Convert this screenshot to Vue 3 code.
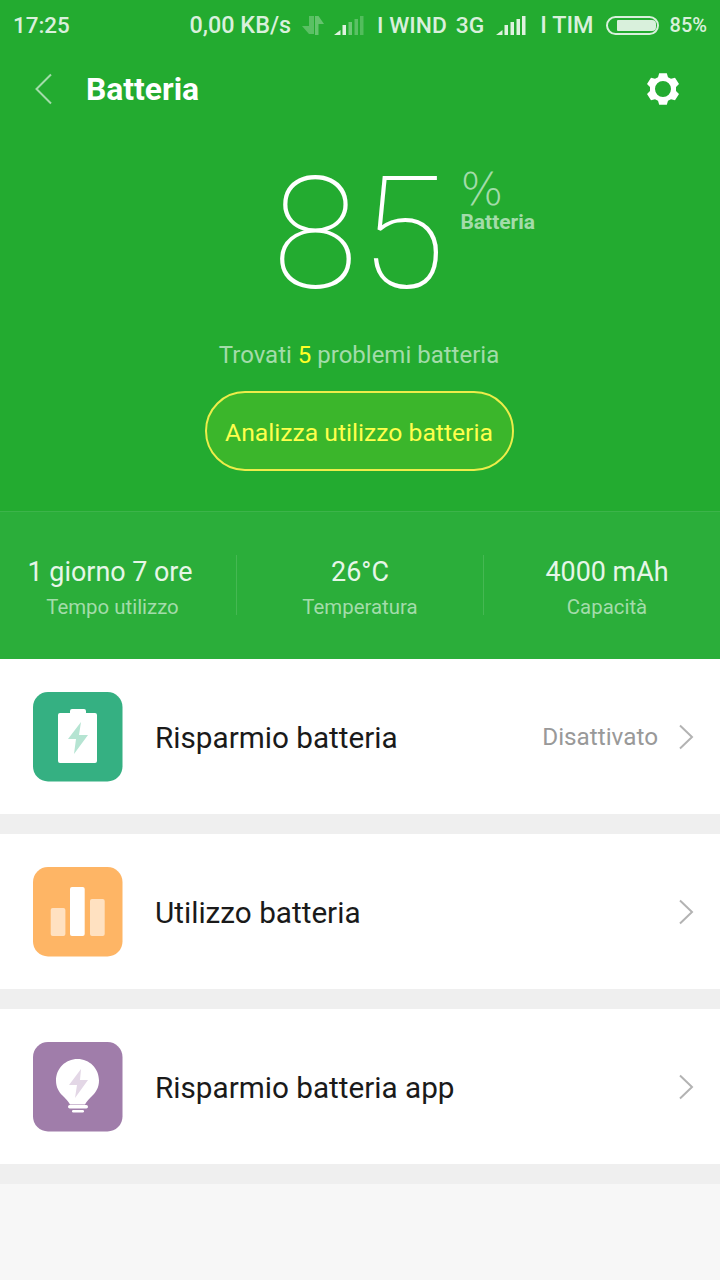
<template>
  <div class="page">
    <div class="hero">
      <div class="status-bar">
        <span class="time">17:25</span>
        <div class="status-right">
          <span class="speed">0,00 KB/s</span>
          <svg class="data-arrows" width="22" height="19" viewBox="0 0 22 19">
            <path d="M12 0v18L7 18 0 10h7V0z" fill="#fff" opacity=".25" />
            <path d="M13 19V0h3.500L22 8h-5.500v11z" fill="#fff" opacity=".3" />
          </svg>
          <svg class="signal signal-wind" width="30" height="19" viewBox="0 0 30 19">
            <path d="M0 19l6.500-5v5z" fill="#dff2e0" />
            <rect x="8.500" y="9" width="3.500" height="10" fill="#dff2e0" />
            <rect x="14.500" y="6" width="3.500" height="13" fill="#dff2e0" opacity=".4" />
            <rect x="20.500" y="3" width="3.500" height="16" fill="#dff2e0" opacity=".3" />
            <rect x="26" y="0" width="3.500" height="19" fill="#dff2e0" opacity=".25" />
          </svg>
          <span class="carrier">I WIND</span>
          <span class="carrier net">3G</span>
          <svg class="signal" width="30" height="19" viewBox="0 0 30 19">
            <path d="M0 19l6.500-5v5z" fill="#dff2e0" />
            <rect x="8.500" y="9" width="3.500" height="10" fill="#dff2e0" />
            <rect x="14.500" y="6" width="3.500" height="13" fill="#dff2e0" />
            <rect x="20.500" y="3" width="3.500" height="16" fill="#dff2e0" />
            <rect x="26" y="0" width="3.500" height="19" fill="#dff2e0" />
          </svg>
          <span class="carrier tim">I TIM</span>
          <div class="battery"><div class="battery-fill"></div></div>
          <span class="carrier pct">{{ level }}%</span>
        </div>
      </div>

      <div class="toolbar">
        <svg class="back" width="20" height="32" viewBox="0 0 20 32">
          <path d="M17 1.500L2.500 16 17 30.500" fill="none" stroke="#a3dcaa" stroke-width="2" />
        </svg>
        <h1 class="title">Batteria</h1>
        <svg class="gear" width="36" height="34" viewBox="0 0 36 34">
          <path
            fill="#fff"
            fill-rule="evenodd"
            d="M14.200 1.200 L21.800 1.200 L23 5.200 L26 6.800 L30 5.800 L34 12 L31 15 L31 19 L34 22 L30 28.200 L26 27.200 L23 28.800 L21.800 32.800 L14.200 32.800 L13 28.800 L10 27.200 L6 28.200 L2 22 L5 19 L5 15 L2 12 L6 5.800 L10 6.800 L13 5.200 Z M18 9 A8 8 0 1 0 18 25 A8 8 0 1 0 18 9 Z"
          />
        </svg>
      </div>

      <div class="level-wrap">
        <span class="level-num">{{ level }}</span>
        <div class="level-side">
          <span class="level-pct">%</span>
          <span class="level-label">Batteria</span>
        </div>
      </div>

      <p class="found">Trovati <span class="found-num">5</span> problemi batteria</p>
      <button class="analyze">Analizza utilizzo batteria</button>
    </div>

    <div class="stats">
      <div v-for="(s, i) in stats" :key="i" class="stat">
        <span class="stat-value">{{ s.value }}</span>
        <span class="stat-label">{{ s.label }}</span>
      </div>
    </div>

    <div class="list">
      <div class="row">
        <svg class="icon" width="90" height="90" viewBox="0 0 90 90">
          <rect x="0" y="0" width="89.500" height="89.500" rx="15" fill="#35b082" />
          <path
            d="M25 23a2 2 0 0 1 2-2h10v-2a2 2 0 0 1 2-2h12a2 2 0 0 1 2 2v2h9a2 2 0 0 1 2 2v46a2 2 0 0 1-2 2H27a2 2 0 0 1-2-2z"
            fill="#fff"
          />
          <path d="M48 30L35 47h8L41 62l14-19h-9z" fill="#b5e4d2" />
        </svg>
        <span class="row-title">Risparmio batteria</span>
        <span class="row-value">Disattivato</span>
        <svg class="chevron" width="16" height="26" viewBox="0 0 16 26">
          <path d="M2 1.500L14 13 2 24.500" fill="none" stroke="#b3b3b3" stroke-width="2" />
        </svg>
      </div>
      <div class="row">
        <svg class="icon" width="90" height="90" viewBox="0 0 90 90">
          <rect x="0" y="0" width="89.500" height="89.500" rx="15" fill="#feb565" />
          <rect x="17.700" y="41" width="14.700" height="28" rx="2" fill="#fff" opacity=".6" />
          <rect x="37" y="20" width="14.700" height="49" rx="2" fill="#fff" />
          <rect x="57" y="32" width="14.700" height="37" rx="2" fill="#fff" opacity=".6" />
        </svg>
        <span class="row-title">Utilizzo batteria</span>
        <svg class="chevron" width="16" height="26" viewBox="0 0 16 26">
          <path d="M2 1.500L14 13 2 24.500" fill="none" stroke="#b3b3b3" stroke-width="2" />
        </svg>
      </div>
      <div class="row">
        <svg class="icon" width="90" height="90" viewBox="0 0 90 90">
          <rect x="0" y="0" width="89.500" height="89.500" rx="15" fill="#a07daa" />
          <path
            d="M44.500 17C32.500 17 23 26.500 23 38.500c0 7 3 11.500 6.500 15 3 3 6 6 7.500 9h15c1.500-3 4.500-6 7.500-9 3.500-3.500 6.500-8 6.500-15C66 26.500 56.500 17 44.500 17z"
            fill="#fff"
          />
          <rect x="35" y="63" width="20" height="3.500" rx="1.700" fill="#fff" />
          <rect x="39" y="68" width="12" height="2.500" rx="1.200" fill="#fff" />
          <path d="M48 27L36 43h8L42 56l13-18h-8z" fill="#e3d7e6" />
        </svg>
        <span class="row-title">Risparmio batteria app</span>
        <svg class="chevron" width="16" height="26" viewBox="0 0 16 26">
          <path d="M2 1.500L14 13 2 24.500" fill="none" stroke="#b3b3b3" stroke-width="2" />
        </svg>
      </div>
    </div>
  </div>
</template>

<script setup>
const level = 85

const stats = [
  { value: "1 giorno 7 ore", label: "Tempo utilizzo" },
  { value: "26°C", label: "Temperatura" },
  { value: "4000 mAh", label: "Capacità" },
]
</script>

<style>
html,
body {
  margin: 0;
  background: #f7f7f7;
}
</style>

<style scoped>
.page {
  width: 720px;
  min-height: 1280px;
  background: #f7f7f7;
  font-family: Roboto, "Liberation Sans", sans-serif;
}

.hero {
  height: 511px;
  background: #23ab30;
  display: flex;
  flex-direction: column;
  align-items: center;
}

.status-bar {
  width: 100%;
  height: 50px;
  box-sizing: border-box;
  padding: 0 13px;
  display: flex;
  justify-content: space-between;
  align-items: center;
  color: #d9f0dc;
  font-size: 22.4px;
  font-weight: 500;
}

.status-right {
  display: flex;
  align-items: center;
}

.speed {
  margin-right: 11px;
  font-size: 23.400px;
}

.data-arrows {
  margin-right: 10px;
}

.signal {
  margin-right: 14px;
}

.signal-wind {
  margin-right: 13px;
}

.carrier {
  font-size: 22.800px;
}

.net {
  margin-left: 9px;
  margin-right: 12px;
}

.tim {
  font-size: 23.400px;
}

.battery {
  width: 53px;
  height: 19px;
  box-sizing: border-box;
  border: 2px solid #d9f0dc;
  border-radius: 10px;
  padding: 2px 1px 2px 0;
  margin-left: 12px;
  margin-right: 11px;
  display: flex;
  justify-content: flex-end;
}

.battery-fill {
  width: 39px;
  height: 100%;
  background: #d9f0dc;
  border-radius: 1px 4px 4px 1px;
}

.pct {
  font-size: 20px;
}

.toolbar {
  width: 100%;
  height: 78px;
  box-sizing: border-box;
  padding: 0 39px 0 34px;
  display: flex;
  align-items: center;
}

.back {
  margin-right: 32px;
}

.title {
  flex: 1;
  margin: 0;
  color: #fff;
  font-size: 31.800px;
  font-weight: 700;
}

.level-wrap {
  position: relative;
  height: 188px;
  margin-top: 12px;
}

.level-num {
  display: block;
  font-size: 156px;
  font-weight: 100;
  line-height: 188px;
  color: #fff;
  letter-spacing: 2px;
}

.level-side {
  position: absolute;
  top: 29px;
  left: calc(100% + 13px);
  display: flex;
  flex-direction: column;
}

.level-pct {
  font-family: "DejaVu Sans", sans-serif;
  font-size: 45px;
  font-weight: 200;
  line-height: 41px;
  color: #a3dcaa;
}

.level-label {
  font-size: 21px;
  font-weight: 700;
  line-height: 24px;
  color: #a3dcaa;
}

.found {
  margin: 12px 2px 0 0;
  font-size: 24px;
  line-height: 30px;
  color: #a3dcaa;
}

.found-num {
  color: #ffff26;
}

.analyze {
  margin-top: 21px;
  margin-right: 2px;
  width: 309px;
  height: 80px;
  box-sizing: border-box;
  padding: 2px 0 0;
  border: 2px solid #eded4a;
  border-radius: 40px;
  background: #3bb62b;
  color: #ffff4d;
  font-family: inherit;
  font-size: 24.700px;
}

.stats {
  height: 148px;
  box-sizing: border-box;
  border-top: 1px solid #3cb44a;
  background: #2bae3a;
  padding-top: 43px;
  display: grid;
  grid-template-columns: 236px 247px 237px;
  align-items: start;
}

.stat {
  height: 60px;
  display: flex;
  flex-direction: column;
  align-items: center;
  border-left: 1px solid #45b852;
}

.stat:first-child {
  border-left: none;
  padding-right: 16px;
}

.stat:first-child .stat-label {
  margin-left: 5px;
}

.stat:last-child {
  padding-left: 10px;
}

.stat-value {
  margin-top: 1px;
  font-size: 26.900px;
  line-height: 32px;
  color: #e6f6e8;
}

.stat-label {
  margin-top: 7px;
  font-size: 20.400px;
  line-height: 24px;
  color: #a3dcaa;
}

.row {
  height: 155px;
  box-sizing: border-box;
  margin-bottom: 20px;
  padding: 0 26px 0 33px;
  background: #fff;
  display: flex;
  align-items: center;
  box-shadow: 0 20px 0 #efefef;
}

.row-title {
  flex: 1;
  margin-left: 32px;
  padding-top: 2px;
  font-size: 29.700px;
  color: #1a1a1a;
}

.row-value {
  margin-right: 20px;
  font-size: 24.300px;
  color: #999;
}
</style>
